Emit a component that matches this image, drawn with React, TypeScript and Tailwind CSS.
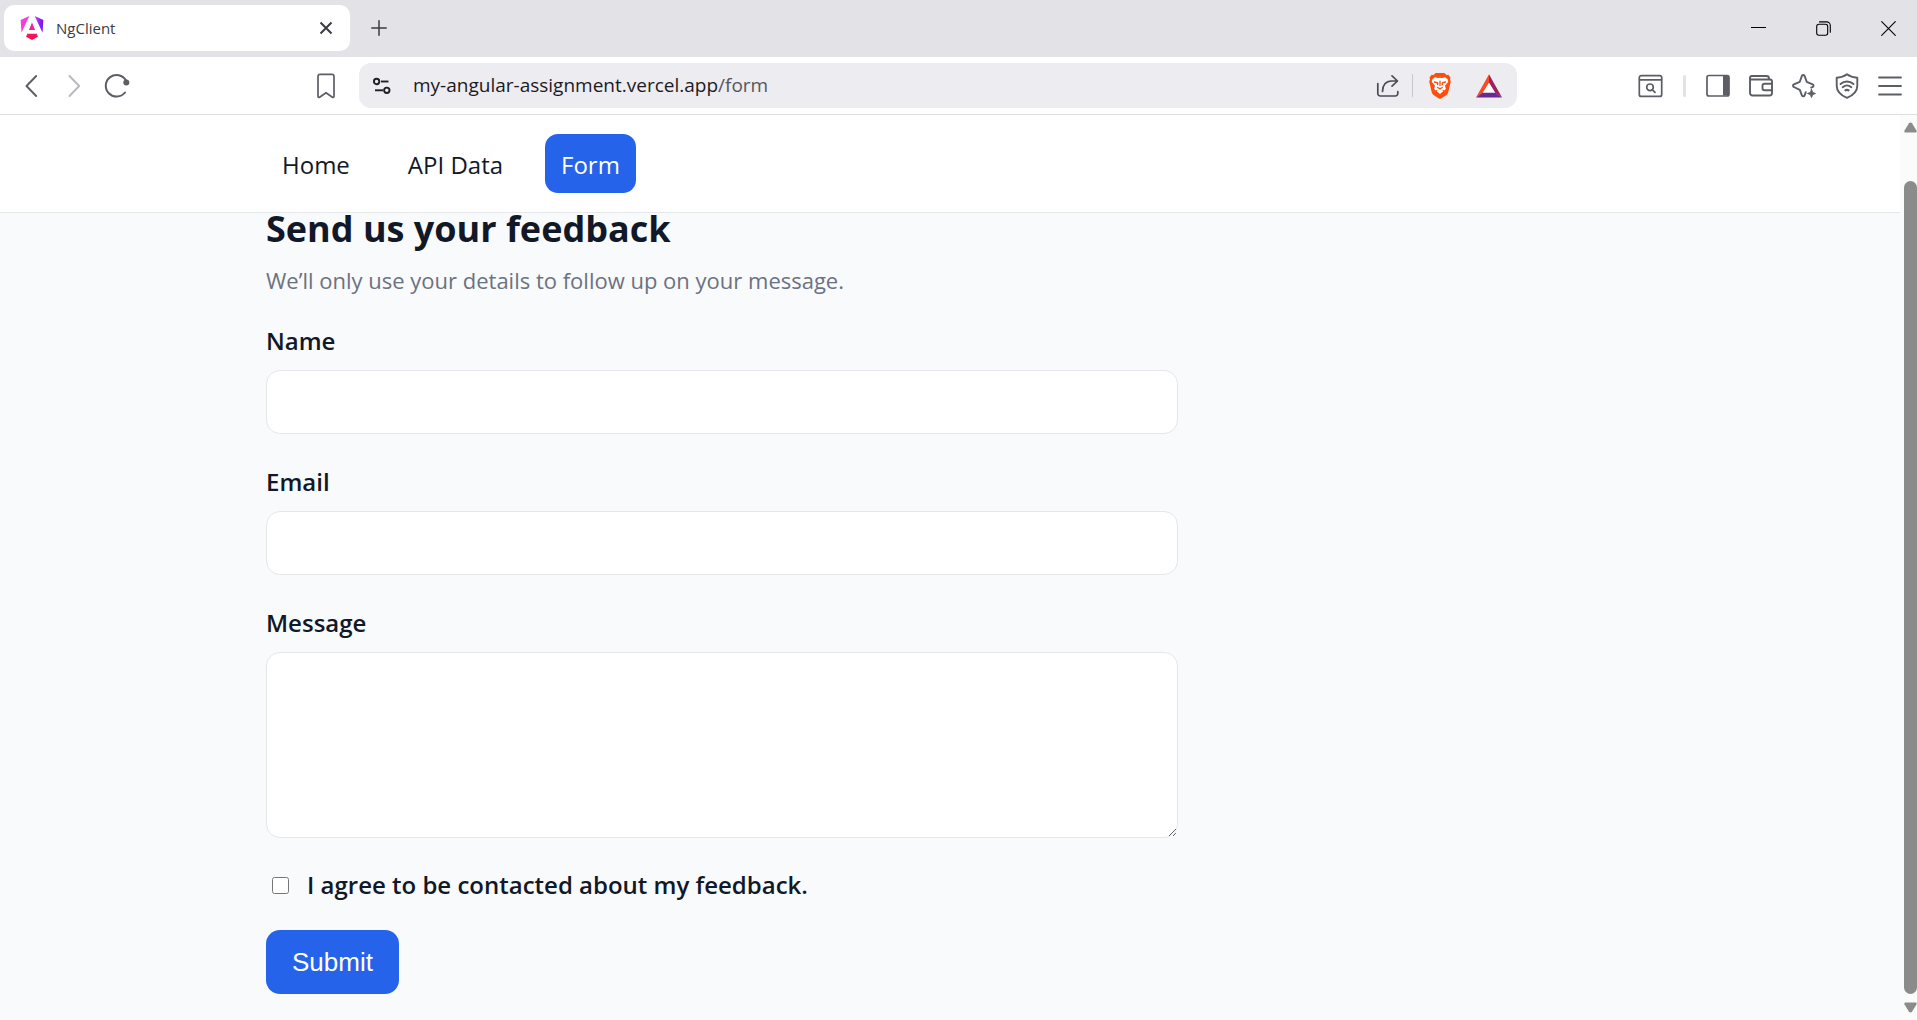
import type { ReactNode } from "react";

const strokeProps = {
  fill: "none",
  stroke: "currentColor",
  strokeLinecap: "round",
  strokeLinejoin: "round",
} as const;

function AngularLogo() {
  return (
    <svg viewBox="0 0 24 24" className="size-6 shrink-0" aria-hidden="true">
      <defs>
        <linearGradient id="ng" x1="0" y1="0.3" x2="1" y2="0.3">
          <stop offset="0" stopColor="#ff3bd0" />
          <stop offset="0.55" stopColor="#e040e8" />
          <stop offset="0.8" stopColor="#9b2cf5" />
          <stop offset="1" stopColor="#6a11f0" />
        </linearGradient>
        <linearGradient id="ngBase" x1="0" y1="0" x2="0" y2="1">
          <stop offset="0" stopColor="#f5156c" />
          <stop offset="1" stopColor="#ff0d3c" />
        </linearGradient>
      </defs>
      <path
        fill="url(#ng)"
        d="M14.692 0l7.832 16.855.814-12.856L14.692 0ZM9.308 0 .662 3.999l.814 12.856L9.308 0Z"
      />
      <path fill="#f0249f" d="M8.903 13.93h6.198L12 6.396 8.903 13.93Z" />
      <path fill="url(#ngBase)" d="M16.712 17.711H7.288l-1.204 2.916L12 24l5.916-3.373-1.204-2.916Z" />
    </svg>
  );
}

function BraveLion() {
  return (
    <svg viewBox="0 0 22 26" className="h-[26px] w-[22px]" aria-hidden="true">
      <path
        fill="#ff4d0c"
        d="M6.500 0h9l2 2 1.800-.2L21.500 4.500 21 6.500l.8 2-2.600 11c-.3 1.200-1 2.100-2 2.800L12 25.600c-.6.400-1.400.4-2 0l-5.200-3.300c-1-.7-1.700-1.600-2-2.800L.2 8.500l.8-2-.5-2L2.700 1.800l1.800.2z"
      />
      <path
        fill="#fff"
        d="M3.300 6.200L6 4.300l2.800.8L11 4.700l2.200.4 2.800-.8 2.700 1.900.6 2.600-3.300 4 .9 2.900-1.300 1.900-2.400-.9 1 1.500L11 21l-3.200-2.800 1-1.500-2.400.9-1.300-1.900.9-2.900-3.300-4z"
      />
      <path
        fill="none"
        stroke="#ff4d0c"
        strokeWidth="1.300"
        strokeLinecap="round"
        strokeLinejoin="round"
        d="M5.500 9l3.300.9-.2 1.800M16.500 9l-3.300.9.2 1.800M8.700 14.500L11 15.900l2.300-1.400M11 8.200v4.300"
      />
    </svg>
  );
}

function IconButton({ label, className = "", children }: { label: string; className?: string; children: ReactNode }) {
  return (
    <button type="button" aria-label={label} className={`shrink-0 ${className}`}>
      {children}
    </button>
  );
}

function TabStrip() {
  return (
    <div className="flex h-[57px] items-center bg-[#e3e2e7] pb-px pl-1 pr-[21px] text-[#3b3d42]">
      <div className="flex h-[46px] w-[346px] items-center rounded-[10px] bg-white pl-4 pr-[17px]">
        <AngularLogo />
        <span className="ml-3 flex-1 text-[15px]">NgClient</span>
        <IconButton label="Close tab">
          <svg viewBox="0 0 14 14" className="size-3.5" {...strokeProps} strokeWidth="2" strokeLinecap="butt">
            <path d="M1.5 1.5l11 11M12.5 1.5l-11 11" />
          </svg>
        </IconButton>
      </div>
      <IconButton label="New tab" className="ml-[21px]">
        <svg viewBox="0 0 16 16" className="size-4" {...strokeProps} strokeWidth="1.5">
          <path d="M8 .8v14.4M.8 8h14.4" />
        </svg>
      </IconButton>
      <div className="ml-auto flex items-center gap-[50px] text-black">
        <IconButton label="Minimize">
          <svg viewBox="0 0 15 15" className="size-[15px]" {...strokeProps} strokeLinecap="butt">
            <path d="M0 6.500h15" />
          </svg>
        </IconButton>
        <IconButton label="Restore">
          <svg viewBox="0 0 15 15" className="size-[15px]" {...strokeProps} strokeWidth="1.1">
            <rect x=".7" y="3.2" width="11" height="11" rx="2.2" />
            <path d="M3.5.9h7a3.8 3.8 0 0 1 3.8 3.8v6.600" />
          </svg>
        </IconButton>
        <IconButton label="Close">
          <svg viewBox="0 0 15 15" className="size-[15px]" {...strokeProps} strokeWidth="1.1">
            <path d="M.7.7l13.6 13.6M14.3.7L.7 14.3" />
          </svg>
        </IconButton>
      </div>
    </div>
  );
}

function AddressBar() {
  return (
    <div className="flex h-[45px] flex-1 items-center rounded-[12px] bg-[#edecf1] pl-[13px] pr-[14px]">
      <IconButton label="Site information" className="text-[#1f2024]">
        <svg viewBox="0 0 20 20" className="size-5" {...strokeProps} strokeWidth="1.9" strokeLinecap="butt">
          <circle cx="4.6" cy="5.5" r="2.7" />
          <path d="M9 5.5h7.5" />
          <circle cx="14.8" cy="14.3" r="2.7" />
          <path d="M3 14.3h8" />
        </svg>
      </IconButton>
      <span className="ml-[21px] flex-1 text-[19px] text-[#1b1b1f]">
        my-angular-assignment.vercel.app<span className="text-[#55565e]">/form</span>
      </span>
      <IconButton label="Share" className="text-[#4b4c52]">
        <svg viewBox="0 0 24 24" className="size-6" {...strokeProps} strokeWidth="1.700">
          <path d="M1.8 9.5v10a2.5 2.5 0 0 0 2.500 2.500h15a2.500 2.500 0 0 0 2.500-2.500v-2" />
          <path d="M6.500 17.500c0-6.500 3.500-10.500 9-10.500h5.500M16 1.800L21.500 7 16 12.200" />
        </svg>
      </IconButton>
      <span className="ml-3 mr-4 h-[23px] w-px bg-[#c9c8cf]" />
      <IconButton label="Brave Shields">
        <BraveLion />
      </IconButton>
      <IconButton label="Brave Rewards" className="ml-6">
        <svg viewBox="0 0 28 24" className="h-6 w-7" aria-hidden="true">
          <path fill="#fff" d="M14 8l7.500 12h-15z" />
          <path fill="#ff4724" d="M14 .3v8.200L7.600 19 1 23.500z" />
          <path fill="#9e1f63" d="M14 .3v8.200L20.400 19l6.600 4.500z" />
          <path fill="#662d91" d="M1 23.500L7.600 18.800h12.800l6.600 4.700z" />
        </svg>
      </IconButton>
    </div>
  );
}

function Toolbar() {
  return (
    <div className="flex h-[58px] items-center border-b border-[#dfdee3] bg-white pl-5 pr-[15px] text-[#5c5e66]">
      <IconButton label="Back">
        <svg viewBox="0 0 24 24" className="size-6" {...strokeProps} strokeWidth="1.9">
          <path d="M16.200 2L6.500 12l9.700 10" />
        </svg>
      </IconButton>
      <IconButton label="Forward" className="ml-[18px] text-[#b9bac0]">
        <svg viewBox="0 0 24 24" className="size-6" {...strokeProps} strokeWidth="1.9">
          <path d="M7.500 2l9.700 10-9.700 10" />
        </svg>
      </IconButton>
      <IconButton label="Reload" className="ml-[18px]">
        <svg viewBox="0 0 26 26" className="size-[26px]" {...strokeProps} strokeWidth="2">
          <path d="M21 19.500A10.800 10.800 0 1 1 22 7.500" />
          <circle cx="22.300" cy="9.500" r="3" fill="currentColor" stroke="none" />
        </svg>
      </IconButton>
      <IconButton label="Bookmark" className="ml-[184px]">
        <svg viewBox="0 0 24 26" className="h-[26px] w-6" {...strokeProps} strokeWidth="1.700">
          <path d="M4 3.200A1.900 1.900 0 0 1 5.900 1.300h12.200A1.900 1.900 0 0 1 20 3.200v20.200c0 .9-.9 1.300-1.600.8L12 19.700l-6.400 4.500c-.7.5-1.600.1-1.600-.8z" />
        </svg>
      </IconButton>
      <div className="ml-[21px] mr-[121px] flex flex-1">
        <AddressBar />
      </div>
      <IconButton label="Search tabs">
        <svg viewBox="0 0 25 24" className="h-6 w-[25px]" {...strokeProps} strokeWidth="1.700">
          <rect x="1.300" y="1.600" width="22.400" height="20.800" rx="2" />
          <path d="M1.500 5.800h22" />
          <circle cx="12" cy="13.300" r="3.300" />
          <path d="M14.500 15.800l2.500 2.500" />
        </svg>
      </IconButton>
      <span className="ml-5 mr-5 h-[22px] w-[3px] rounded bg-[#e3e2e7]" />
      <div className="flex items-center gap-[19px]">
        <IconButton label="Sidebar">
          <svg viewBox="0 0 24 24" className="size-6" {...strokeProps} strokeWidth="1.700">
            <rect x="1" y="1.500" width="22" height="20.500" rx="2" />
            <path d="M17 2h4.500a1.500 1.500 0 0 1 1.500 1.500v16.500a1.500 1.500 0 0 1-1.500 1.500H17z" fill="currentColor" stroke="none" />
          </svg>
        </IconButton>
        <IconButton label="Wallet">
          <svg viewBox="0 0 24 24" className="size-6" {...strokeProps} strokeWidth="1.900">
            <path d="M1 4v15a2.500 2.500 0 0 0 2.500 2.500h17A2.500 2.500 0 0 0 23 19V7.500a2 2 0 0 0-2-2H2.500A1.500 1.500 0 0 1 1 4a2 2 0 0 1 2-2h14.500a2.500 2.500 0 0 1 2.500 2.500v.8" />
            <path d="M23 9.700h-7.500A2 2 0 0 0 13.500 11.700v2.600a2 2 0 0 0 2 2H23" />
          </svg>
        </IconButton>
        <IconButton label="Leo AI">
          <svg viewBox="0 0 24 24" className="size-6" {...strokeProps} strokeWidth="1.900">
            <path d="M13.800 18.200l-1.200 3.100c-.5 1.300-2.200 1.300-2.700 0L7.800 15.800 1.900 13c-1.200-.5-1.200-2.100 0-2.600l5.900-2.600 2.100-5.900c.5-1.300 2.200-1.300 2.700 0l2.100 5.900 5.900 2.600c1.200.5 1.200 2.100 0 2.600l-1.400.7" />
            <path d="M19.500 15.500l1.100 2.900 2.900 1.100-2.900 1.100-1.100 2.900-1.100-2.900-2.900-1.100 2.900-1.100z" fill="currentColor" strokeWidth="1" />
          </svg>
        </IconButton>
        <IconButton label="VPN">
          <svg viewBox="0 0 24 26" className="h-[26px] w-6" {...strokeProps} strokeWidth="1.900">
            <path d="M12 1.300c3 2.300 6.300 3.200 10.300 3.400v8c0 5.700-3.800 9.400-10.300 12.200C5.500 22.100 1.700 18.400 1.700 12.700v-8c4-.2 7.300-1.100 10.300-3.400z" />
            <path d="M5.500 11c3.800-3.400 9.200-3.400 13 0M7.700 14.200c2.600-2.200 6-2.200 8.600 0" />
            <path d="M10.500 17.300c1-.6 2-.6 3 0" strokeWidth="2.200" />
          </svg>
        </IconButton>
        <IconButton label="Menu">
          <svg viewBox="0 0 24 24" className="size-6" {...strokeProps} strokeWidth="1.800">
            <path d="M1 3.500h22M1 12h22M1 20.500h22" />
          </svg>
        </IconButton>
      </div>
    </div>
  );
}

function NavLink({ active = false, children }: { active?: boolean; children: ReactNode }) {
  const tone = active ? "bg-[#2563eb] text-white" : "text-[#111827]";
  return (
    <a href="#" aria-current={active ? "page" : undefined} className={`rounded-[13px] px-4 pb-[11px] pt-[13px] text-[24px] leading-[35px] ${tone}`}>
      {children}
    </a>
  );
}

const fieldClass = "block w-full rounded-[14px] border border-[#e5e7eb] bg-white px-4 text-[24px] outline-none";
const labelClass = "block text-[24px] font-semibold leading-8";

function FeedbackForm() {
  return (
    <form className="max-w-[912px]" onSubmit={(e) => e.preventDefault()}>
      <label htmlFor="name" className={labelClass}>Name</label>
      <input id="name" type="text" className={`mt-[13px] h-16 ${fieldClass}`} />
      <label htmlFor="email" className={`mt-8 ${labelClass}`}>Email</label>
      <input id="email" type="email" className={`mt-[13px] h-16 ${fieldClass}`} />
      <label htmlFor="message" className={`mt-8 ${labelClass}`}>Message</label>
      <textarea id="message" className={`mt-[13px] h-[186px] resize ${fieldClass}`} />
      <div className="mt-[31px] flex items-center pl-1.5">
        <input id="agree" type="checkbox" className="size-[17px] shrink-0" />
        <label htmlFor="agree" className={`ml-[18px] ${labelClass}`}>I agree to be contacted about my feedback.</label>
      </div>
      <button
        type="submit"
        className="mt-[29px] h-16 rounded-[14px] bg-[#2563eb] px-[26px] font-['Liberation_Sans',sans-serif] text-[26px] text-white"
      >
        Submit
      </button>
    </form>
  );
}

function Scrollbar() {
  return (
    <div className="flex w-[17px] shrink-0 flex-col items-end bg-[#fbfbfb] pb-[7px] pt-[7px] text-[#8b8b8b]" aria-hidden="true">
      <svg viewBox="0 0 13 11" className="h-[11px] w-[13px]" fill="currentColor">
        <path d="M5 1.200a1.800 1.800 0 0 1 3 0l4.500 7.300c.5.900 0 2-1 2h-10c-1 0-1.500-1.100-1-2z" />
      </svg>
      <div className="mt-12 w-[13px] flex-1 rounded-full bg-[#8b8b8b]" />
      <svg viewBox="0 0 13 11" className="mt-2 h-[11px] w-[13px]" fill="currentColor">
        <path d="M5 9.800a1.800 1.800 0 0 0 3 0l4.500-7.300c.5-.9 0-2-1-2h-10c-1 0-1.500 1.100-1 2z" />
      </svg>
    </div>
  );
}

export default function App() {
  return (
    <div className="flex min-h-screen flex-col bg-white font-['Open_Sans','Noto_Sans',sans-serif]">
      <TabStrip />
      <Toolbar />
      <div className="flex flex-1">
        <div className="flex min-w-0 flex-1 flex-col bg-[#f9fafc] text-[#111827]">
          <header className="border-b border-[#e5e7eb] bg-white px-6 py-[19px]">
            <nav className="mx-auto flex max-w-[1368px] gap-[26px]">
              <NavLink>Home</NavLink>
              <NavLink>API Data</NavLink>
              <NavLink active>Form</NavLink>
            </nav>
          </header>
          <main className="flex-1 px-6 pb-6">
            <div className="mx-auto max-w-[1368px]">
              <h1 className="text-[36px] font-bold leading-8">Send us your feedback</h1>
              <p className="mb-[29px] mt-[19px] text-[22px] leading-8 text-[#6b7280]">
                We’ll only use your details to follow up on your message.
              </p>
              <FeedbackForm />
            </div>
          </main>
        </div>
        <Scrollbar />
      </div>
    </div>
  );
}
